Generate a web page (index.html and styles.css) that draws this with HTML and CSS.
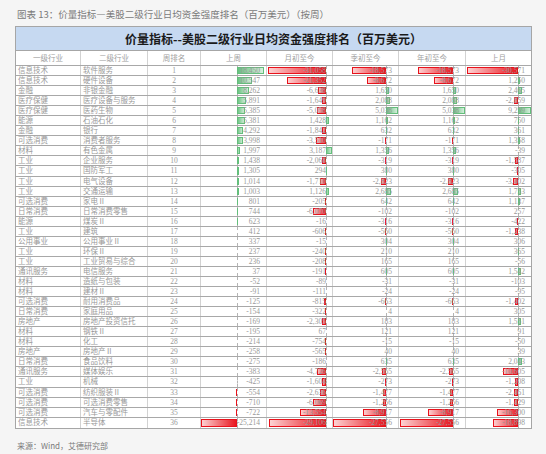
FILE: index.html
```html
<!DOCTYPE html>
<html lang="zh">
<head>
<meta charset="utf-8">
<title>价量指标</title>
<link rel="stylesheet" href="styles.css">
</head>
<body>
<div class="cap">图表 13：价量指标—美股二级行业日均资金强度排名（百万美元）（按周）</div>
<div class="tbl">
<div class="band">价量指标--美股二级行业日均资金强度排名（百万美元）</div>
<div class="row head"><div class="c">一级行业</div><div class="c">二级行业</div><div class="c">周排名</div><div class="c">上周</div><div class="c">月初至今</div><div class="c">季初至今</div><div class="c">年初至今</div><div class="c">上月</div></div>

<div class="row"><div class="c l1">信息技术</div><div class="c l2">软件服务</div><div class="c rk">1</div><div class="c v a1"><i class="b p" style="--w:27px"></i><span>18,450</span></div><div class="c v a2"><i class="b n" style="--w:58px"></i><span>-31,058</span></div><div class="c v a3"><i class="b n" style="--w:34px"></i><span>-18,573</span></div><div class="c v a4"><i class="b n" style="--w:35px"></i><span>-18,573</span></div><div class="c v a5"><i class="b n" style="--w:51px"></i><span>-30,571</span></div></div>
<div class="row"><div class="c l1">信息技术</div><div class="c l2">硬件设备</div><div class="c rk">2</div><div class="c v a1"><i class="b p" style="--w:15px"></i><span>10,547</span></div><div class="c v a2"><i class="b n" style="--w:39px"></i><span>-21,352</span></div><div class="c v a3"><i class="b n" style="--w:19px"></i><span>-8,672</span></div><div class="c v a4"><i class="b n" style="--w:19px"></i><span>-8,672</span></div><div class="c v a5"><i class="b p" style="--w:2px"></i><span>1,250</span></div></div>
<div class="row"><div class="c l1">金融</div><div class="c l2">非银金融</div><div class="c rk">3</div><div class="c v a1"><i class="b p" style="--w:12px"></i><span>8,262</span></div><div class="c v a2"><i class="b n" style="--w:8px"></i><span>-6,638</span></div><div class="c v a3"><i class="b p" style="--w:3px"></i><span>1,650</span></div><div class="c v a4"><i class="b p" style="--w:3px"></i><span>1,650</span></div><div class="c v a5"><i class="b p" style="--w:4px"></i><span>2,465</span></div></div>
<div class="row"><div class="c l1">医疗保健</div><div class="c l2">医疗设备与服务</div><div class="c rk">4</div><div class="c v a1"><i class="b p" style="--w:9px"></i><span>5,891</span></div><div class="c v a2"><i class="b n" style="--w:4px"></i><span>-1,649</span></div><div class="c v a3"><i class="b p" style="--w:4px"></i><span>2,088</span></div><div class="c v a4"><i class="b p" style="--w:4px"></i><span>2,088</span></div><div class="c v a5"><i class="b n" style="--w:4px"></i><span>-2,859</span></div></div>
<div class="row"><div class="c l1">医疗保健</div><div class="c l2">医药生物</div><div class="c rk">5</div><div class="c v a1"><i class="b p" style="--w:8px"></i><span>5,385</span></div><div class="c v a2"><i class="b n" style="--w:9px"></i><span>-5,058</span></div><div class="c v a3"><i class="b p" style="--w:12px"></i><span>5,038</span></div><div class="c v a4"><i class="b p" style="--w:12px"></i><span>5,038</span></div><div class="c v a5"><i class="b p" style="--w:13px"></i><span>9,259</span></div></div>
<div class="row"><div class="c l1">能源</div><div class="c l2">石油石化</div><div class="c rk">6</div><div class="c v a1"><i class="b p" style="--w:8px"></i><span>5,381</span></div><div class="c v a2"><i class="b p" style="--w:3px"></i><span>1,428</span></div><div class="c v a3"><i class="b p" style="--w:2px"></i><span>1,162</span></div><div class="c v a4"><i class="b p" style="--w:2px"></i><span>1,162</span></div><div class="c v a5"><i class="b p" style="--w:1px"></i><span>750</span></div></div>
<div class="row"><div class="c l1">金融</div><div class="c l2">银行</div><div class="c rk">7</div><div class="c v a1"><i class="b p" style="--w:6px"></i><span>4,292</span></div><div class="c v a2"><i class="b n" style="--w:4px"></i><span>-1,842</span></div><div class="c v a3"><i class="b p" style="--w:1px"></i><span>632</span></div><div class="c v a4"><i class="b p" style="--w:1px"></i><span>632</span></div><div class="c v a5"><i class="b p" style="--w:1px"></i><span>361</span></div></div>
<div class="row"><div class="c l1">可选消费</div><div class="c l2">消费者服务</div><div class="c rk">8</div><div class="c v a1"><i class="b p" style="--w:6px"></i><span>3,998</span></div><div class="c v a2"><i class="b n" style="--w:10px"></i><span>-3,510</span></div><div class="c v a3"><i class="b n" style="--w:1px"></i><span>-171</span></div><div class="c v a4"><i class="b n" style="--w:1px"></i><span>-171</span></div><div class="c v a5"><i class="b p" style="--w:2px"></i><span>1,358</span></div></div>
<div class="row"><div class="c l1">材料</div><div class="c l2">有色金属</div><div class="c rk">9</div><div class="c v a1"><i class="b p" style="--w:3px"></i><span>1,997</span></div><div class="c v a2"><i class="b p" style="--w:6px"></i><span>3,187</span></div><div class="c v a3"><i class="b p" style="--w:3px"></i><span>1,356</span></div><div class="c v a4"><i class="b p" style="--w:3px"></i><span>1,356</span></div><div class="c v a5"><span>-39</span></div></div>
<div class="row"><div class="c l1">工业</div><div class="c l2">企业服务</div><div class="c rk">10</div><div class="c v a1"><i class="b p" style="--w:2px"></i><span>1,438</span></div><div class="c v a2"><i class="b n" style="--w:4px"></i><span>-2,068</span></div><div class="c v a3"><i class="b n" style="--w:1px"></i><span>-319</span></div><div class="c v a4"><i class="b n" style="--w:1px"></i><span>-319</span></div><div class="c v a5"><i class="b n" style="--w:3px"></i><span>-1,587</span></div></div>
<div class="row"><div class="c l1">工业</div><div class="c l2">国防军工</div><div class="c rk">11</div><div class="c v a1"><i class="b p" style="--w:2px"></i><span>1,305</span></div><div class="c v a2"><i class="b p" style="--w:1px"></i><span>294</span></div><div class="c v a3"><i class="b p" style="--w:1px"></i><span>380</span></div><div class="c v a4"><i class="b p" style="--w:1px"></i><span>380</span></div><div class="c v a5"><i class="b n" style="--w:1px"></i><span>-305</span></div></div>
<div class="row"><div class="c l1">工业</div><div class="c l2">电气设备</div><div class="c rk">12</div><div class="c v a1"><i class="b p" style="--w:2px"></i><span>1,014</span></div><div class="c v a2"><i class="b n" style="--w:6px"></i><span>-1,710</span></div><div class="c v a3"><i class="b n" style="--w:5px"></i><span>-2,823</span></div><div class="c v a4"><i class="b n" style="--w:5px"></i><span>-2,823</span></div><div class="c v a5"><i class="b n" style="--w:5px"></i><span>-3,402</span></div></div>
<div class="row"><div class="c l1">工业</div><div class="c l2">交通运输</div><div class="c rk">13</div><div class="c v a1"><i class="b p" style="--w:2px"></i><span>1,003</span></div><div class="c v a2"><i class="b p" style="--w:3px"></i><span>1,126</span></div><div class="c v a3"><i class="b p" style="--w:5px"></i><span>2,685</span></div><div class="c v a4"><i class="b p" style="--w:5px"></i><span>2,685</span></div><div class="c v a5"><i class="b p" style="--w:3px"></i><span>1,753</span></div></div>
<div class="row"><div class="c l1">可选消费</div><div class="c l2">家电Ⅱ</div><div class="c rk">14</div><div class="c v a1"><i class="b p" style="--w:1px"></i><span>801</span></div><div class="c v a2"><i class="b n" style="--w:1px"></i><span>-205</span></div><div class="c v a3"><i class="b p" style="--w:1px"></i><span>642</span></div><div class="c v a4"><i class="b p" style="--w:1px"></i><span>642</span></div><div class="c v a5"><i class="b p" style="--w:2px"></i><span>1,137</span></div></div>
<div class="row"><div class="c l1">日常消费</div><div class="c l2">日常消费零售</div><div class="c rk">15</div><div class="c v a1"><i class="b p" style="--w:1px"></i><span>744</span></div><div class="c v a2"><i class="b n" style="--w:13px"></i><span>-6,070</span></div><div class="c v a3"><span>-102</span></div><div class="c v a4"><span>-102</span></div><div class="c v a5"><span>257</span></div></div>
<div class="row"><div class="c l1">能源</div><div class="c l2">煤炭Ⅱ</div><div class="c rk">16</div><div class="c v a1"><i class="b p" style="--w:1px"></i><span>623</span></div><div class="c v a2"><span>-16</span></div><div class="c v a3"><i class="b n" style="--w:1px"></i><span>-316</span></div><div class="c v a4"><i class="b n" style="--w:1px"></i><span>-316</span></div><div class="c v a5"><i class="b n" style="--w:1px"></i><span>-422</span></div></div>
<div class="row"><div class="c l1">工业</div><div class="c l2">建筑</div><div class="c rk">17</div><div class="c v a1"><span>412</span></div><div class="c v a2"><i class="b n" style="--w:1px"></i><span>-606</span></div><div class="c v a3"><i class="b n" style="--w:1px"></i><span>-560</span></div><div class="c v a4"><i class="b n" style="--w:1px"></i><span>-560</span></div><div class="c v a5"><i class="b n" style="--w:3px"></i><span>-1,238</span></div></div>
<div class="row"><div class="c l1">公用事业</div><div class="c l2">公用事业Ⅱ</div><div class="c rk">18</div><div class="c v a1"><span>337</span></div><div class="c v a2"><span>-15</span></div><div class="c v a3"><i class="b p" style="--w:1px"></i><span>304</span></div><div class="c v a4"><i class="b p" style="--w:1px"></i><span>304</span></div><div class="c v a5"><span>306</span></div></div>
<div class="row"><div class="c l1">工业</div><div class="c l2">环保Ⅱ</div><div class="c rk">19</div><div class="c v a1"><span>237</span></div><div class="c v a2"><i class="b n" style="--w:1px"></i><span>-240</span></div><div class="c v a3"><span>210</span></div><div class="c v a4"><span>210</span></div><div class="c v a5"><i class="b p" style="--w:1px"></i><span>365</span></div></div>
<div class="row"><div class="c l1">工业</div><div class="c l2">工业贸易与综合</div><div class="c rk">20</div><div class="c v a1"><span>236</span></div><div class="c v a2"><i class="b n" style="--w:1px"></i><span>-208</span></div><div class="c v a3"><span>165</span></div><div class="c v a4"><span>165</span></div><div class="c v a5"><span>-56</span></div></div>
<div class="row"><div class="c l1">通讯服务</div><div class="c l2">电信服务</div><div class="c rk">21</div><div class="c v a1"><span>37</span></div><div class="c v a2"><i class="b n" style="--w:1px"></i><span>-191</span></div><div class="c v a3"><i class="b p" style="--w:1px"></i><span>605</span></div><div class="c v a4"><i class="b p" style="--w:1px"></i><span>605</span></div><div class="c v a5"><i class="b p" style="--w:3px"></i><span>1,542</span></div></div>
<div class="row"><div class="c l1">材料</div><div class="c l2">造纸与包装</div><div class="c rk">22</div><div class="c v a1"><span>-52</span></div><div class="c v a2"><span>-89</span></div><div class="c v a3"><span>-31</span></div><div class="c v a4"><span>-31</span></div><div class="c v a5"><span>-103</span></div></div>
<div class="row"><div class="c l1">材料</div><div class="c l2">建材Ⅱ</div><div class="c rk">23</div><div class="c v a1"><span>-91</span></div><div class="c v a2"><span>-111</span></div><div class="c v a3"><span>-24</span></div><div class="c v a4"><span>-24</span></div><div class="c v a5"><span>-95</span></div></div>
<div class="row"><div class="c l1">可选消费</div><div class="c l2">耐用消费品</div><div class="c rk">24</div><div class="c v a1"><span>-125</span></div><div class="c v a2"><i class="b n" style="--w:2px"></i><span>-815</span></div><div class="c v a3"><i class="b n" style="--w:1px"></i><span>-663</span></div><div class="c v a4"><i class="b n" style="--w:1px"></i><span>-663</span></div><div class="c v a5"><i class="b n" style="--w:3px"></i><span>-1,402</span></div></div>
<div class="row"><div class="c l1">日常消费</div><div class="c l2">家庭用品</div><div class="c rk">25</div><div class="c v a1"><span>-154</span></div><div class="c v a2"><i class="b n" style="--w:1px"></i><span>-322</span></div><div class="c v a3"><span>4</span></div><div class="c v a4"><span>4</span></div><div class="c v a5"><span>305</span></div></div>
<div class="row"><div class="c l1">房地产</div><div class="c l2">房地产投资信托</div><div class="c rk">26</div><div class="c v a1"><span>-169</span></div><div class="c v a2"><i class="b n" style="--w:4px"></i><span>-2,305</span></div><div class="c v a3"><span>183</span></div><div class="c v a4"><span>183</span></div><div class="c v a5"><i class="b p" style="--w:3px"></i><span>1,551</span></div></div>
<div class="row"><div class="c l1">材料</div><div class="c l2">钢铁Ⅱ</div><div class="c rk">27</div><div class="c v a1"><span>-195</span></div><div class="c v a2"><span>67</span></div><div class="c v a3"><span>121</span></div><div class="c v a4"><span>121</span></div><div class="c v a5"><span>91</span></div></div>
<div class="row"><div class="c l1">材料</div><div class="c l2">化工</div><div class="c rk">28</div><div class="c v a1"><span>-214</span></div><div class="c v a2"><i class="b n" style="--w:1px"></i><span>-754</span></div><div class="c v a3"><span>-15</span></div><div class="c v a4"><span>-15</span></div><div class="c v a5"><span>-50</span></div></div>
<div class="row"><div class="c l1">房地产</div><div class="c l2">房地产Ⅱ</div><div class="c rk">29</div><div class="c v a1"><span>-258</span></div><div class="c v a2"><i class="b n" style="--w:1px"></i><span>-565</span></div><div class="c v a3"><span>40</span></div><div class="c v a4"><span>40</span></div><div class="c v a5"><span>39</span></div></div>
<div class="row"><div class="c l1">日常消费</div><div class="c l2">食品饮料</div><div class="c rk">30</div><div class="c v a1"><span>-275</span></div><div class="c v a2"><span>-186</span></div><div class="c v a3"><i class="b p" style="--w:1px"></i><span>635</span></div><div class="c v a4"><i class="b p" style="--w:1px"></i><span>635</span></div><div class="c v a5"><i class="b p" style="--w:4px"></i><span>2,043</span></div></div>
<div class="row"><div class="c l1">通讯服务</div><div class="c l2">媒体娱乐</div><div class="c rk">31</div><div class="c v a1"><span>-383</span></div><div class="c v a2"><i class="b n" style="--w:9px"></i><span>-4,726</span></div><div class="c v a3"><i class="b n" style="--w:4px"></i><span>-2,565</span></div><div class="c v a4"><i class="b n" style="--w:4px"></i><span>-2,565</span></div><div class="c v a5"><i class="b n" style="--w:15px"></i><span>-10,605</span></div></div>
<div class="row"><div class="c l1">工业</div><div class="c l2">机械</div><div class="c rk">32</div><div class="c v a1"><span>-425</span></div><div class="c v a2"><i class="b n" style="--w:4px"></i><span>-1,604</span></div><div class="c v a3"><i class="b n" style="--w:1px"></i><span>-273</span></div><div class="c v a4"><i class="b n" style="--w:1px"></i><span>-273</span></div><div class="c v a5"><i class="b n" style="--w:3px"></i><span>-1,208</span></div></div>
<div class="row"><div class="c l1">可选消费</div><div class="c l2">纺织服装Ⅱ</div><div class="c rk">33</div><div class="c v a1"><i class="b n" style="--w:1px"></i><span>-554</span></div><div class="c v a2"><i class="b n" style="--w:6px"></i><span>-2,636</span></div><div class="c v a3"><i class="b n" style="--w:3px"></i><span>-1,477</span></div><div class="c v a4"><i class="b n" style="--w:3px"></i><span>-1,477</span></div><div class="c v a5"><i class="b n" style="--w:4px"></i><span>-2,461</span></div></div>
<div class="row"><div class="c l1">可选消费</div><div class="c l2">可选消费零售</div><div class="c rk">34</div><div class="c v a1"><i class="b n" style="--w:1px"></i><span>-710</span></div><div class="c v a2"><i class="b n" style="--w:13px"></i><span>-6,069</span></div><div class="c v a3"><i class="b n" style="--w:3px"></i><span>-1,256</span></div><div class="c v a4"><i class="b n" style="--w:3px"></i><span>-1,256</span></div><div class="c v a5"><i class="b n" style="--w:4px"></i><span>-1,429</span></div></div>
<div class="row"><div class="c l1">可选消费</div><div class="c l2">汽车与零配件</div><div class="c rk">35</div><div class="c v a1"><i class="b n" style="--w:1px"></i><span>-722</span></div><div class="c v a2"><i class="b n" style="--w:26px"></i><span>-13,554</span></div><div class="c v a3"><i class="b n" style="--w:23px"></i><span>-8,917</span></div><div class="c v a4"><i class="b n" style="--w:25px"></i><span>-8,917</span></div><div class="c v a5"><i class="b n" style="--w:21px"></i><span>-16,300</span></div></div>
<div class="row"><div class="c l1">信息技术</div><div class="c l2">半导体</div><div class="c rk">36</div><div class="c v a1"><i class="b n" style="--w:36px"></i><span>-25,214</span></div><div class="c v a2"><i class="b n" style="--w:57px"></i><span>-29,106</span></div><div class="c v a3"><i class="b n" style="--w:53px"></i><span>-27,556</span></div><div class="c v a4"><i class="b n" style="--w:53px"></i><span>-27,556</span></div><div class="c v a5"><i class="b n" style="--w:25px"></i><span>-18,898</span></div></div>
</div>
<div class="src">来源：Wind，艾德研究部</div>
</body>
</html>
```

FILE: styles.css
```css
html, body {
  margin: 0;
  padding: 0;
}
body {
  width: 546px;
  height: 454px;
  overflow: hidden;
  background: #f5f5f5;
  font-family: "Liberation Serif", "Noto Sans CJK SC", serif;
}
.cap {
  padding: 1px 0 0 17px;
  height: 25px;
  line-height: 26px;
  font-size: 9.5px;
  color: #7a7a7a;
  font-family: "Noto Sans CJK SC", sans-serif;
  white-space: nowrap;
}
.tbl {
  margin-left: 15px;
  width: 517px;
  border: 1px solid #a6a6a6;
  box-sizing: border-box;
  background: #fff;
}
.band {
  height: 23px;
  line-height: 23px;
  background: #c6d9f1;
  text-align: center;
  font-family: "Noto Sans CJK SC", sans-serif;
  font-weight: bold;
  font-size: 12px;
  color: #1a1a1a;
  border-bottom: 1px solid #a6a6a6;
}
.row {
  display: grid;
  grid-template-columns: 65px 67px 53px 66px 66px 66px 67px 65px;
  height: 10.05px;
  border-bottom: 1px solid #a8a8a8;
  box-sizing: border-box;
}
.row:last-child {
  border-bottom: 0;
}
.head {
  height: 15px;
}
.c {
  border-right: 1px solid #d2d2d2;
  font-size: 7.5px;
  line-height: 9px;
  color: #999;
  white-space: nowrap;
  overflow: hidden;
}
.c:last-child {
  border-right: 0;
}
.head .c {
  line-height: 14px;
  text-align: center;
  color: #a0a0a0;
  font-family: "Noto Sans CJK SC", sans-serif;
}
.l1, .l2 {
  padding-left: 2px;
}
.rk {
  text-align: center;
}
.v {
  position: relative;
}
.a1 { --ax: 36px; }
.a2 { --ax: 59px; }
.a3 { --ax: 53px; }
.a4 { --ax: 54px; }
.a5 { --ax: 52px; }
.v::before {
  content: "";
  position: absolute;
  top: 0;
  bottom: 0;
  left: var(--ax);
  border-left: 1px dashed #b4b4b4;
}
.v span {
  position: relative;
  display: block;
  text-align: right;
  padding-right: 6px;
}
.b {
  position: absolute;
  top: 1px;
  bottom: 1px;
  width: var(--w);
}
.p {
  left: var(--ax);
  background: linear-gradient(to right, #63be7b, #dcf1e2);
  box-shadow: inset 0 0 0 1px #63be7b;
}
.n {
  right: calc(100% - var(--ax));
  background: linear-gradient(to left, #e8121b, #fdd6d6);
  box-shadow: inset 0 0 0 1px #e8121b;
}
.src {
  margin: 11px 0 0 17px;
  font-size: 8px;
  line-height: 12px;
  color: #7a7a7a;
  font-family: "Noto Sans CJK SC", sans-serif;
}
```
